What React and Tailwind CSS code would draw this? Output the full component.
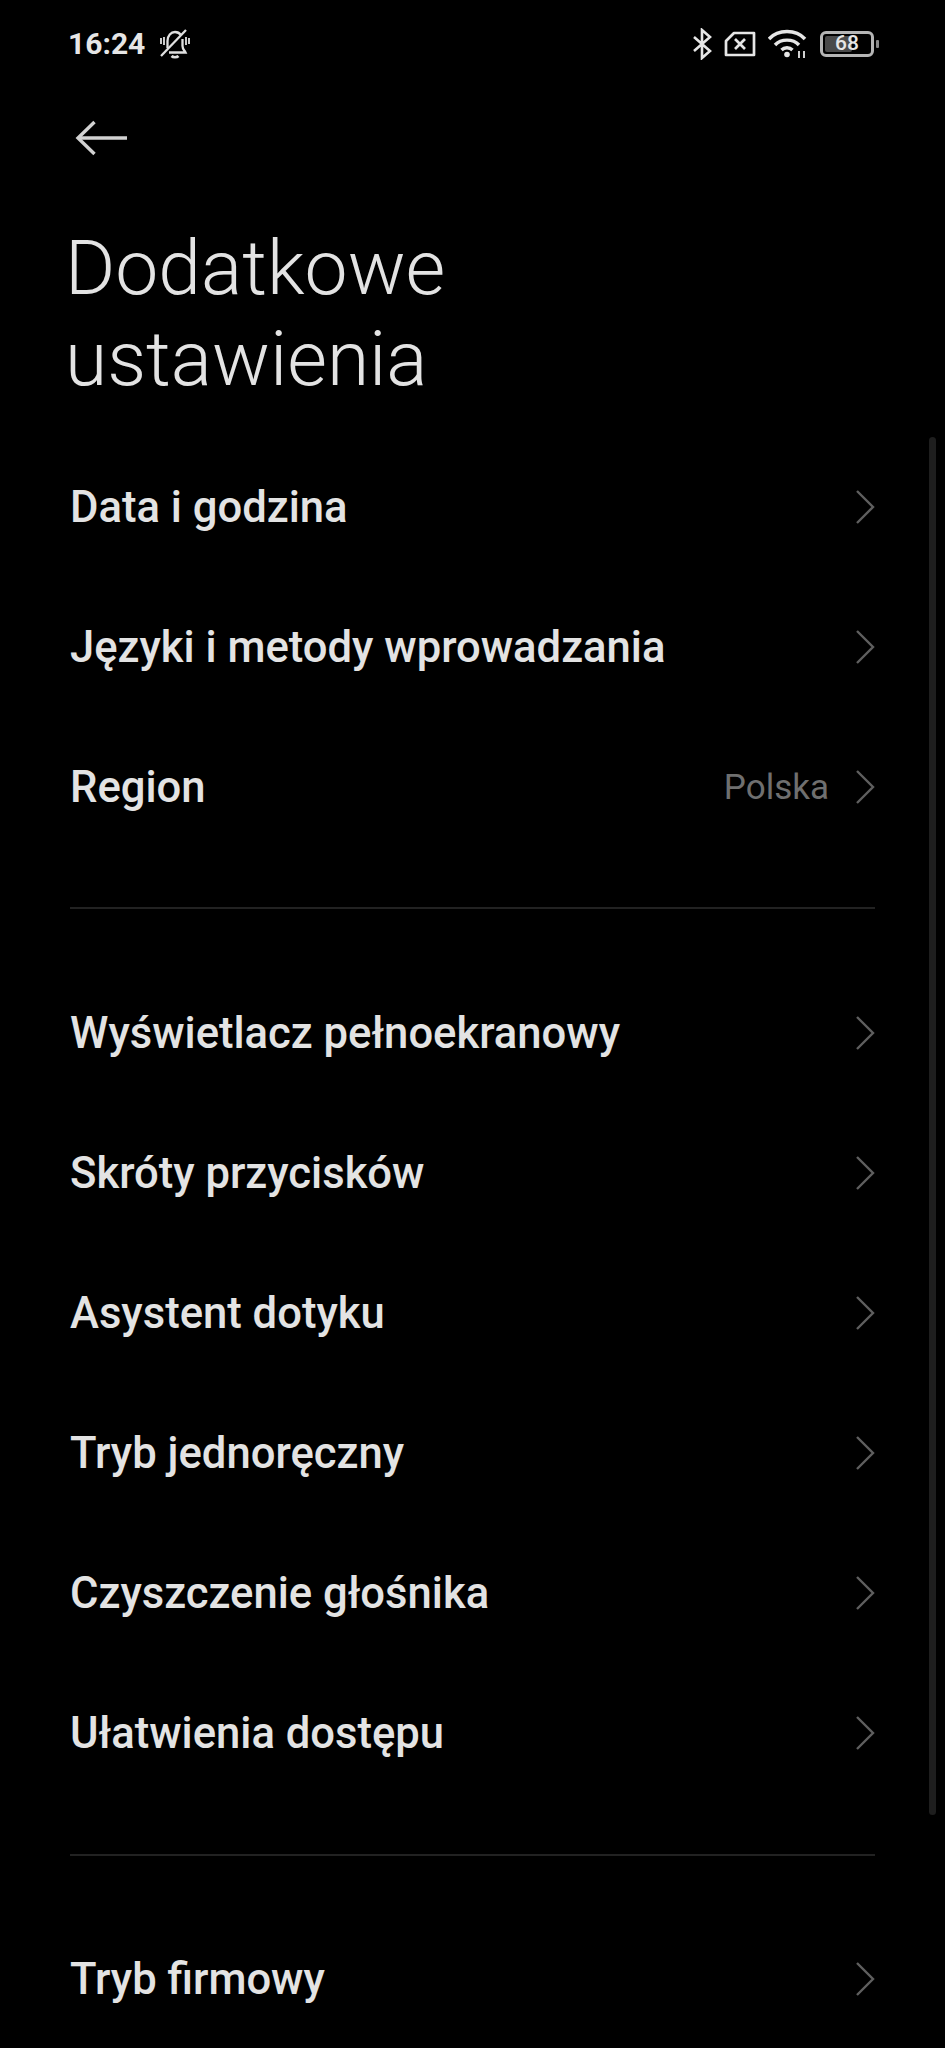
const Chevron = () => (
  <svg width="20" height="36" viewBox="0 0 20 36" fill="none" className="shrink-0">
    <path d="M2 2 L18 18 L2 34" stroke="#5f5f5f" strokeWidth="2.4" />
  </svg>
);

const Row = ({ label, value }) => (
  <div className="flex h-[140px] items-center justify-between">
    <span className="pt-[2px] text-[43.6px] leading-none font-medium text-[#e3e3e3]">{label}</span>
    <div className="flex items-center">
      {value && <span className="mr-[26px] text-[35px] leading-none text-[#6f6f6f]">{value}</span>}
      <Chevron />
    </div>
  </div>
);

const Divider = ({ className }) => <div className={`h-[2px] bg-[#222222] ${className}`} />;

const BellOff = () => (
  <svg width="32" height="30" viewBox="0 0 32 30" fill="none" stroke="#e0e0e0" strokeWidth="2.3" className="ml-[14px]">
    <path d="M8.5 19 V12 C8.5 6.5 12 3 16 3 C18.5 3 20.5 4 22 6" />
    <path d="M23.5 10 V17 C23.5 20 25.5 21.5 26.5 23.5 H10" />
    <path d="M12.5 27 C14 28.6 18 28.6 19.5 27" strokeWidth="2.6" />
    <path d="M2 27 L27 1" />
    <path d="M2 9 V15 M5 8 V16 M27 8 V16 M30 9 V15" strokeWidth="1.8" />
  </svg>
);

const Bluetooth = () => (
  <svg width="20" height="32" viewBox="0 0 20 32" fill="none" stroke="#e6e6e6" strokeWidth="2.6">
    <path d="M2 9 L18 23 L10 30 V2 L18 9 L2 23" />
  </svg>
);

const Sim = () => (
  <svg width="32" height="26" viewBox="0 0 32 26" fill="none" stroke="#e6e6e6" strokeWidth="2.7" className="ml-[12px]">
    <path d="M10 2 H30 V24 H2 V10 Z" strokeLinejoin="round" />
    <path d="M11 8 L21 18 M21 8 L11 18" />
  </svg>
);

const Wifi = () => (
  <svg width="40" height="30" viewBox="0 0 40 30" fill="none" stroke="#e6e6e6" className="ml-[12px]">
    <path d="M1 10 C10 0 28 0 37 10" strokeWidth="3.4" />
    <path d="M7 16 C13 9.5 25 9.5 31 16" strokeWidth="3.4" />
    <path d="M13.5 21 C16.5 18 21.5 18 24.5 21" strokeWidth="3.4" />
    <circle cx="19" cy="25.5" r="2.8" fill="#e6e6e6" stroke="none" />
    <path d="M31 22 V29 M36 22 V29" strokeWidth="1.8" />
  </svg>
);

const Battery = () => (
  <div className="ml-[12px] flex items-center">
    <div className="relative flex h-[26px] w-[54px] items-center rounded-[6px] border-[3px] border-[#b5b5b5] p-[2px]">
      <div className="h-full w-[62%] rounded-[2px] bg-[#4a4a4a]" />
      <span className="absolute inset-0 flex items-center justify-center text-[21px] leading-none font-medium text-[#e6e6e6]">68</span>
    </div>
    <div className="ml-[2px] h-[8px] w-[3px] rounded-[1px] bg-[#8a8a8a]" />
  </div>
);

export default function App() {
  return (
    <div
      className="relative h-[2048px] w-[945px] overflow-hidden bg-black"
      style={{ fontFamily: 'Roboto, "Liberation Sans", sans-serif' }}
    >
      <div className="flex h-[87px] items-center justify-between pr-[66px] pl-[68px]">
        <div className="flex items-center">
          <span className="text-[30px] leading-none font-bold text-[#e6e6e6]">16:24</span>
          <BellOff />
        </div>
        <div className="flex items-center">
          <Bluetooth />
          <Sim />
          <Wifi />
          <Battery />
        </div>
      </div>

      <div className="mt-[15px] flex h-[72px] items-center pl-[75px]">
        <svg width="54" height="36" viewBox="0 0 54 36" fill="none" stroke="#d2d2d2" strokeWidth="3.4">
          <path d="M52 18 H4" />
          <path d="M19.5 2 L3 18 L19.5 34" />
        </svg>
      </div>

      <h1 className="mt-[49px] pl-[65px] text-[76.8px] leading-[91px] font-light text-[#e3e3e3]">
        Dodatkowe
        <br />
        ustawienia
      </h1>

      <div className="mt-[32px] px-[70px]">
        <Row label="Data i godzina" />
        <Row label="Języki i metody wprowadzania" />
        <Row label="Region" value="Polska" />
        <Divider className="mt-[50px] mb-[54px]" />
        <Row label="Wyświetlacz pełnoekranowy" />
        <Row label="Skróty przycisków" />
        <Row label="Asystent dotyku" />
        <Row label="Tryb jednoręczny" />
        <Row label="Czyszczenie głośnika" />
        <Row label="Ułatwienia dostępu" />
        <Divider className="mt-[51px] mb-[53px]" />
        <Row label="Tryb firmowy" />
      </div>

      <div className="absolute top-[437px] left-[929px] h-[1378px] w-[7px] rounded-full bg-[#1e1e1e]" />
    </div>
  );
}
